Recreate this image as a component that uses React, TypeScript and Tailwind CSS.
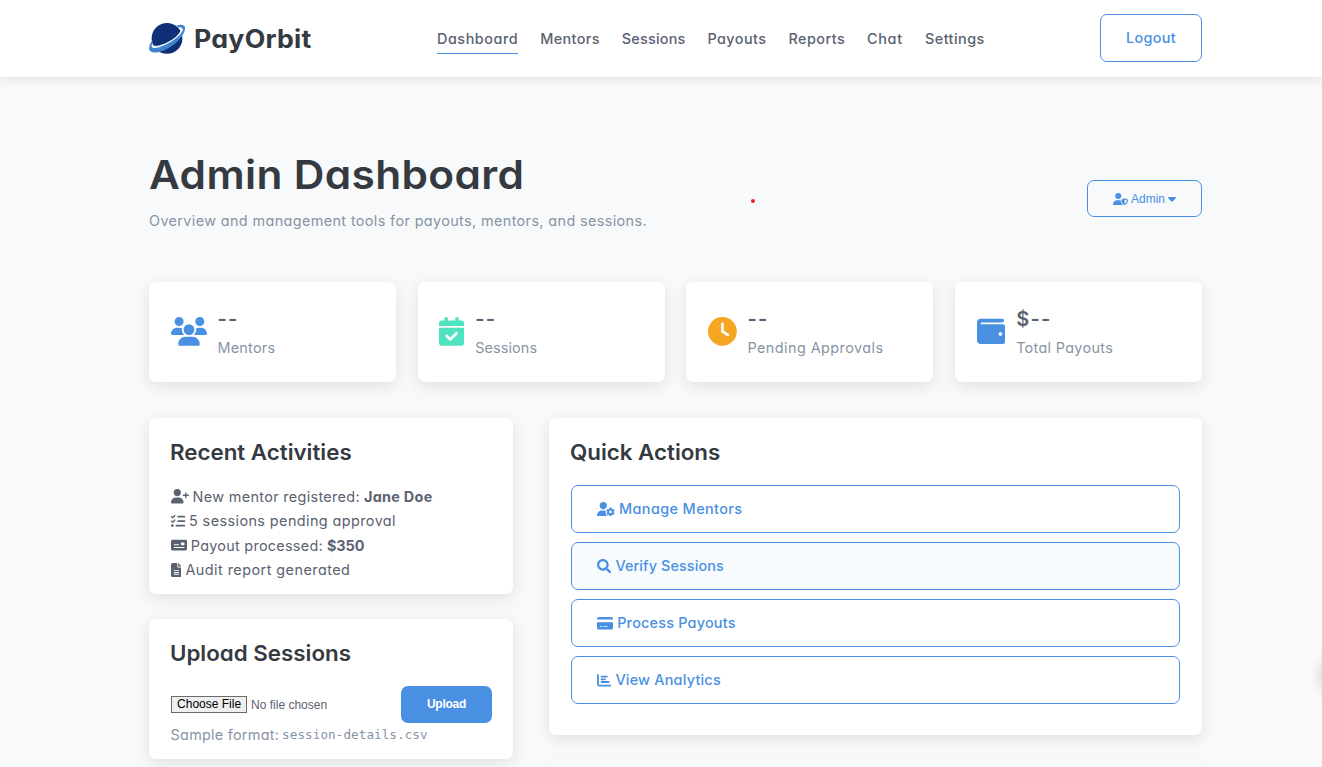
import React from "react";
import type { ReactNode } from "react";
import type { IconType } from "react-icons";
import { FaSearch } from "react-icons/fa";
import {
  FaUsers,
  FaCalendarCheck,
  FaClock,
  FaWallet,
  FaUserPlus,
  FaListCheck,
  FaMoneyCheck,
  FaFileLines,
  FaUserGear,
  FaCreditCard,
  FaChartBar,
  FaUserShield,
  FaCaretDown,
} from "react-icons/fa6";

const navItems = [
  { label: "Dashboard", style: "w-[81.2px] tracking-[0.538px] border-b border-[#4a90e2]" },
  { label: "Mentors", style: "w-[59.4px] tracking-[0.355px]" },
  { label: "Sessions", style: "w-[63.6px] tracking-[0.227px]" },
  { label: "Payouts", style: "w-[58.9px] tracking-[0.44px]" },
  { label: "Reports", style: "w-[56.4px] tracking-[0.469px]" },
  { label: "Chat", style: "w-[36px] tracking-[0.7px]" },
  { label: "Settings", style: "w-[60px] tracking-[0.45px]" },
];

const stats: { icon: IconType; iconStyle: string; value: string; label: string; tracking: string }[] = [
  { icon: FaUsers, iconStyle: "w-9 text-[#4a90e2]", value: "--", label: "Mentors", tracking: "tracking-[0.27px]" },
  { icon: FaCalendarCheck, iconStyle: "w-[25.2px] text-[#50e3c2]", value: "--", label: "Sessions", tracking: "tracking-[0.121px]" },
  { icon: FaClock, iconStyle: "w-[28.8px] text-[#f5a623]", value: "--", label: "Pending Approvals", tracking: "tracking-[0.443px]" },
  { icon: FaWallet, iconStyle: "w-[28.8px] text-[#4a90e2]", value: "$--", label: "Total Payouts", tracking: "tracking-[0.327px]" },
];

const activities: {
  icon: IconType;
  iconWidth: string;
  text: string;
  strong?: string;
  tracking: string;
  strongTracking?: string;
}[] = [
  { icon: FaUserPlus, iconWidth: "w-[18px]", text: "New mentor registered:", strong: "Jane Doe", tracking: "tracking-[0.34px]", strongTracking: "tracking-[0.285px]" },
  { icon: FaListCheck, iconWidth: "w-[14.4px]", text: "5 sessions pending approval", tracking: "tracking-[0.42px]" },
  { icon: FaMoneyCheck, iconWidth: "w-[16.2px]", text: "Payout processed:", strong: "$350", tracking: "tracking-[0.28px]", strongTracking: "tracking-[-0.03px]" },
  { icon: FaFileLines, iconWidth: "w-[10.8px]", text: "Audit report generated", tracking: "tracking-[0.465px]" },
];

const actions: { icon: IconType; iconWidth: string; label: string; style: string }[] = [
  { icon: FaUserGear, iconWidth: "w-[18px]", label: "Manage Mentors", style: "tracking-[0.407px]" },
  { icon: FaSearch, iconWidth: "w-[14.4px]", label: "Verify Sessions", style: "tracking-[0.113px] bg-[#f7fbfe]" },
  { icon: FaCreditCard, iconWidth: "w-[16.2px]", label: "Process Payouts", style: "tracking-[0.218px]" },
  { icon: FaChartBar, iconWidth: "w-[14.4px]", label: "View Analytics", style: "tracking-[0.223px]" },
];

function PlanetLogo() {
  return (
    <svg width="37" height="33" viewBox="0 0 37 33" fill="none">
      <circle cx="18" cy="16.4" r="15.4" fill="#0f2f76" />
      <path
        d="M27.5 3.6C33 1.8 36.6 3 36 7.2C35 14 26.8 22.6 17 27.4C9.3 31 1.3 32 .3 27.6C-.3 24.5 .9 21.5 4 17.8C2.9 21.2 2.7 23.3 4.1 24.4C7 26.4 14.6 23.8 21.6 19.4C28.8 14.8 33.6 9.4 33 6.7C32.6 5.2 31 4.9 29.5 5.4Z"
        fill="#3f83cf"
      />
      <path
        d="M31.9 6.2C34 6 34.5 7 33.5 9C31 13.8 24.2 19.2 16.5 22.7C9.8 25.7 3.7 27 2.9 25C2.4 23.8 2.7 22 3.4 20.4C3.1 22.6 3.9 23.6 5.8 23.8C10 24.2 17 21.6 23.3 17.5C29.3 13.4 32.7 8.6 31.9 6.2Z"
        fill="#f3f8fd"
      />
    </svg>
  );
}

function Card({ className, children }: { className: string; children: ReactNode }) {
  return (
    <section className={`rounded-[7px] bg-white shadow-[0_4px_16px_rgba(0,0,0,0.1)] ${className}`}>{children}</section>
  );
}

function CardTitle({ children }: { children: ReactNode }) {
  return (
    <h2 className="mb-4 -ml-[0.5px] origin-left scale-x-[1.034] text-[21.6px] leading-8 font-semibold text-[#343a40]">
      {children}
    </h2>
  );
}

export default function App() {
  return (
    <div className="relative h-[767px] w-full overflow-hidden bg-[#f8f9fb] font-['Inter',sans-serif] text-[14.4px] whitespace-nowrap text-[#5a6270] [font-feature-settings:'cv11']">
      <header className="h-[77px] bg-white shadow-[0_2px_10px_rgba(0,0,0,0.1)]">
        <div className="ml-[149px] flex h-full w-[1053px] items-center justify-between">
          <a className="flex w-[288px] items-center gap-[8px]">
            <PlanetLogo />
            <span className="origin-left scale-x-[1.06] text-[25.2px] leading-8 font-bold tracking-[0.22px] text-[#343a40]">
              PayOrbit
            </span>
          </a>
          <nav className="flex flex-1 gap-[22.1px] pt-px">
            {navItems.map((item) => (
              <a key={item.label} className={`h-[30px] leading-[30px] font-medium ${item.style}`}>
                {item.label}
              </a>
            ))}
          </nav>
          <button className="mb-px h-12 w-[102px] rounded-[7px] border border-[#4a90e2] font-medium tracking-[0.333px] text-[#4a90e2]">
            Logout
          </button>
        </div>
      </header>

      <main className="ml-[149px] w-[1053px] pt-[74px]">
        <div className="flex h-[131px] justify-between">
          <div>
            <h1 className="origin-left scale-x-[1.06] text-[40px] leading-12 font-semibold tracking-[0.34px] text-[#343a40]">
              Admin Dashboard
            </h1>
            <p className="mt-[10px] leading-6 tracking-[0.381px] text-[#8794a5]">
              Overview and management tools for payouts, mentors, and sessions.
            </p>
          </div>
          <button className="mt-[29px] flex h-[37px] w-[115px] items-center justify-center gap-[3px] rounded-[7px] border border-[#4a90e2] font-['Liberation_Sans',sans-serif] text-[12px] text-[#4a90e2]">
            <FaUserShield className="h-[12px] w-[15px]" />
            <span>Admin</span>
            <FaCaretDown className="h-[13px] w-[8px]" />
          </button>
        </div>

        <div className="grid grid-cols-4 gap-[21.6px]">
          {stats.map(({ icon: Icon, iconStyle, value, label, tracking }) => (
            <Card key={label} className="flex h-[100px] items-center px-[21.6px]">
              <Icon className={`mr-[10.8px] mb-px h-[28.8px] ${iconStyle}`} />
              <div>
                <div className="text-[20px] leading-[28px] font-semibold tracking-[1.3px] text-[#5a6270]">{value}</div>
                <div className={`mt-[2px] -mb-px pt-px leading-6 text-[#8794a5] ${tracking}`}>{label}</div>
              </div>
            </Card>
          ))}
        </div>

        <div className="mt-9 flex items-start gap-9">
          <div className="flex w-[364px] flex-col gap-[25px]">
            <Card className="h-[176px] px-[21.6px] pt-[18px]">
              <CardTitle>Recent Activities</CardTitle>
              <ul className="pt-[0.4px]">
                {activities.map(({ icon: Icon, iconWidth, text, strong, tracking, strongTracking }) => (
                  <li key={text} className="flex h-[24.4px] items-center gap-[4px]">
                    <Icon className={`h-[14.4px] ${iconWidth}`} />
                    <span className={tracking}>{text}</span>
                    {strong && <strong className={`font-bold ${strongTracking}`}>{strong}</strong>}
                  </li>
                ))}
              </ul>
            </Card>
            <Card className="h-[140px] px-[21.6px] pt-[18px]">
              <CardTitle>Upload Sessions</CardTitle>
              <div className="-mr-[0.6px] mt-[17px] flex h-[37px] items-center justify-between font-['Liberation_Sans',sans-serif] text-[12px]">
                <div className="flex items-center gap-[4.5px]">
                  <button className="h-[17px] w-[76px] border border-[#6b6b6b] bg-[#efefef] pl-px leading-[15px] text-black">
                    Choose File
                  </button>
                  <span>No file chosen</span>
                </div>
                <button className="h-[37px] w-[91px] rounded-[7px] bg-[#4a90e2] pb-px font-bold tracking-[-0.25px] text-white">
                  Upload
                </button>
              </div>
              <p className="flex items-center gap-[3px] leading-6 tracking-[0.261px] text-[#8794a5]">
                <span>Sample format:</span>
                <code className="font-['DejaVu_Sans_Mono',monospace] text-[12.6px] tracking-[0.08px]">
                  session-details.csv
                </code>
              </p>
            </Card>
          </div>

          <div className="flex w-[653px] flex-col gap-[25px]">
            <Card className="h-[317px] px-[21.6px] pt-[18px]">
              <CardTitle>Quick Actions</CardTitle>
              <div className="flex flex-col gap-[9px] pt-px">
                {actions.map(({ icon: Icon, iconWidth, label, style }) => (
                  <button
                    key={label}
                    className={`flex h-12 items-center gap-[4px] rounded-[7px] border border-[#4a90e2] pl-[25.4px] font-medium text-[#4a90e2] ${style}`}
                  >
                    <Icon className={`h-[14.4px] ${iconWidth}`} />
                    <span>{label}</span>
                  </button>
                ))}
              </div>
            </Card>
            <section className="h-[60px] rounded-[7px] bg-[#f9fafb] shadow-[0_4px_16px_rgba(0,0,0,0.05)]" />
          </div>
        </div>
      </main>

      <span className="absolute top-[199px] left-[751px] size-[4px] rounded-full bg-[#e8202a]" />
      <div className="absolute top-[650px] -right-[46px] size-[46px] rounded-full bg-white shadow-[0_2px_14px_rgba(0,0,0,0.2)]" />
    </div>
  );
}
